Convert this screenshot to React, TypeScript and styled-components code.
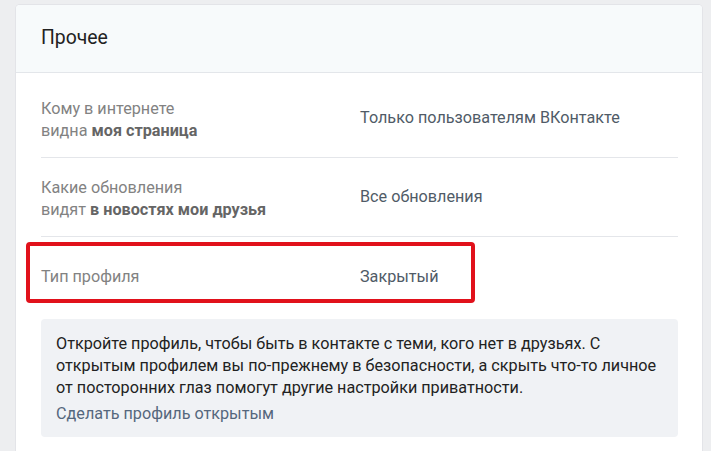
import React from "react";
import styled, { createGlobalStyle } from "styled-components";

const Global = createGlobalStyle`
  html, body { margin: 0; padding: 0; background: #edeef0; }
  body { font-family: Roboto, "Open Sans", "DejaVu Sans", sans-serif; -webkit-font-smoothing: antialiased; }
  * { box-sizing: border-box; }
`;

const Page = styled.div`
  padding: 5px 9px 0 16px;
  height: 451px;
  overflow: hidden;
`;

const Card = styled.div`
  background: #ffffff;
  border-radius: 4px 4px 0 0;
  box-shadow: 0 0 0 1px #e3e4e8;
  min-height: 460px;
`;

const Header = styled.div`
  height: 68px;
  display: flex;
  align-items: center;
  padding: 0 25px 2px;
  background: #f7fafb;
  border-bottom: 1px solid #e3e6ea;
  border-radius: 4px 4px 0 0;
  font-size: 19.4px;
  color: #222222;
`;

const Body = styled.div`
  padding: 6px 24px 0 25px;
`;

const Row = styled.div<{ $top: number; $bottom: number; $divider?: boolean }>`
  position: relative;
  display: grid;
  grid-template-columns: 319px 1fr;
  align-items: start;
  padding: ${(p) => p.$top}px 0 ${(p) => p.$bottom}px;
  border-bottom: ${(p) => (p.$divider ? "1px solid #e4e6ea" : "none")};
  font-size: 16.2px;
  line-height: 22px;
`;

const Label = styled.div`
  color: #828282;
  b { color: #656565; font-weight: 700; }
`;

const Value = styled.div<{ $shift?: number }>`
  color: #505b67;
  margin-top: ${(p) => p.$shift ?? 0}px;
`;

const Highlight = styled.div`
  position: absolute;
  left: -15px;
  top: 5px;
  width: 449px;
  height: 61px;
  border: 4px solid #e1111b;
  border-radius: 4px;
  pointer-events: none;
`;

const Info = styled.div`
  background: #f0f2f5;
  border-radius: 4px;
  padding: 14px 15px 12px;
  font-size: 16.2px;
  line-height: 22px;
  color: #222222;
`;

const InfoText = styled.p`
  margin: 0;
`;

const InfoLink = styled.a`
  display: block;
  margin-top: 4px;
  color: #55677d;
  text-decoration: none;
  cursor: pointer;
`;

export default function App() {
  return (
    <>
      <Global />
      <Page>
        <Card>
          <Header>Прочее</Header>
          <Body>
            <Row $divider $top={19} $bottom={15}>
              <Label>
                Кому в интернете
                <br />
                видна <b>моя страница</b>
              </Label>
              <Value $shift={9}>Только пользователям ВКонтакте</Value>
            </Row>
            <Row $divider $top={19} $bottom={15}>
              <Label>
                Какие обновления
                <br />
                видят <b>в новостях мои друзья</b>
              </Label>
              <Value $shift={9}>Все обновления</Value>
            </Row>
            <Row $top={29} $bottom={31}>
              <Label>Тип профиля</Label>
              <Value>Закрытый</Value>
              <Highlight />
            </Row>
            <Info>
              <InfoText>
                Откройте профиль, чтобы быть в контакте с теми, кого нет в друзьях. С открытым профилем вы
                по-прежнему в безопасности, а скрыть что-то личное от посторонних глаз помогут другие
                настройки приватности.
              </InfoText>
              <InfoLink>Сделать профиль открытым</InfoLink>
            </Info>
          </Body>
        </Card>
      </Page>
    </>
  );
}
